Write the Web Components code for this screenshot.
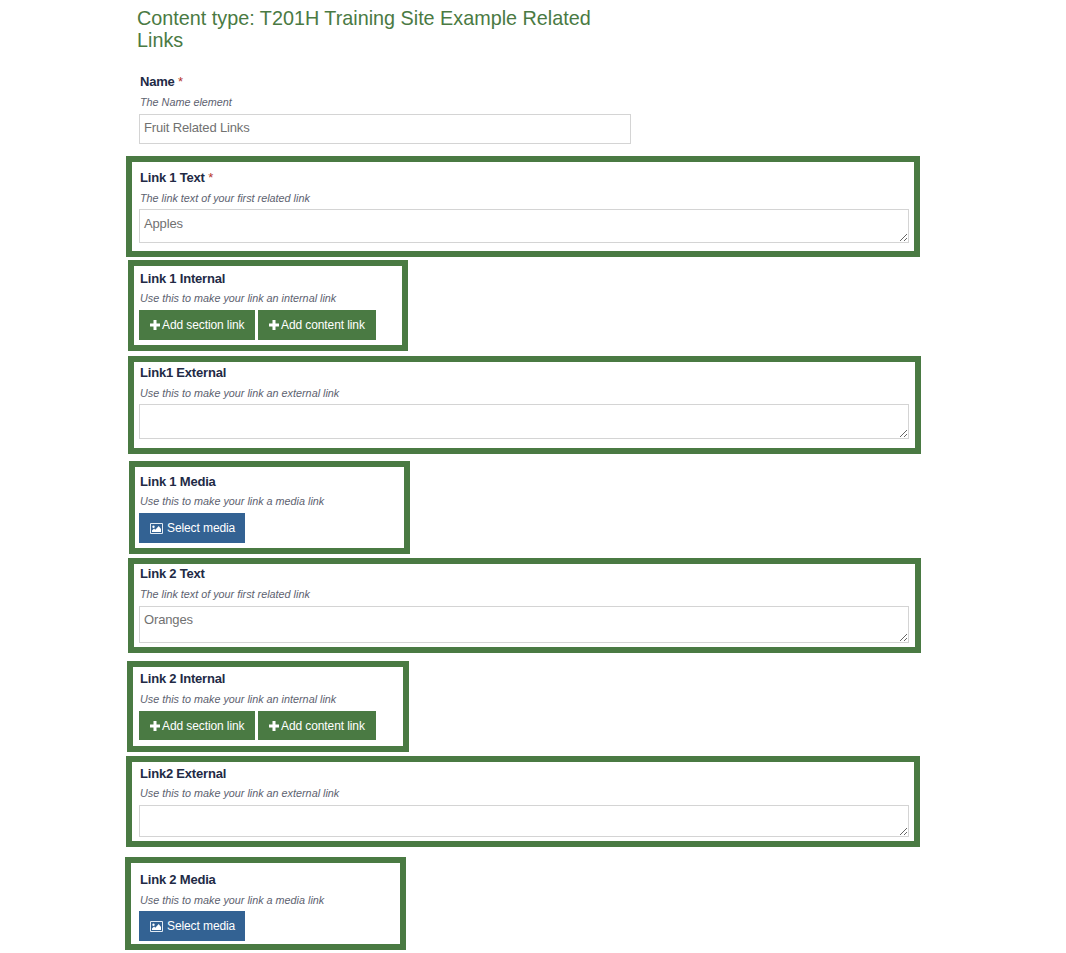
<!DOCTYPE html>
<html>
<head>
<meta charset="utf-8">
<title>Content type</title>
<style>
  body { margin: 0; background: #fff; font-family: "Liberation Sans", Arial, sans-serif; }
</style>
</head>
<body>
<edit-page>
  <h-title>Content type: T201H Training Site Example Related Links</h-title>

  <form-field label="Name" help="The Name element" required style="--mt:21px;--ml:139px;--w:492px;--bw:0px;--pl:0px;--pt:0px;--pb:0px;--gap:4px;--gap2:4px">
    <text-box>Fruit Related Links</text-box>
  </form-field>

  <form-field label="Link 1 Text" help="The link text of your first related link" required style="--mt:12px;--ml:126px;--w:794px;--pt:6px;--pb:8px;--gap:4px;--gap2:3px">
    <area-box h="34">Apples</area-box>
  </form-field>

  <form-field label="Link 1 Internal" help="Use this to make your link an internal link" style="--mt:3px;--ml:128px;--w:280px;--pt:3px;--pb:5px;--gap:3px;--gap2:4px;--pl:5px">
    <action-btn icon="plus" w="116">Add section link</action-btn>
    <action-btn icon="plus" w="118">Add content link</action-btn>
  </form-field>

  <form-field label="Link1 External" help="Use this to make your link an external link" style="--mt:5px;--ml:128px;--w:793px;--pt:1px;--pb:9px;--gap:4px;--gap2:3px;--pl:5px">
    <area-box h="35"></area-box>
  </form-field>

  <form-field label="Link 1 Media" help="Use this to make your link a media link" style="--mt:7px;--ml:129px;--w:281px;--pt:5px;--pb:5px;--gap:3px;--gap2:4px;--pl:4px">
    <action-btn icon="picture" color="#336293" w="106">Select media</action-btn>
  </form-field>

  <form-field label="Link 2 Text" help="The link text of your first related link" style="--mt:4px;--ml:128px;--w:793px;--pt:0px;--pb:4px;--gap:4px;--gap2:4px;--pl:5px">
    <area-box h="37" pad="3">Oranges</area-box>
  </form-field>

  <form-field label="Link 2 Internal" help="Use this to make your link an internal link" style="--mt:8px;--ml:127px;--w:282px;--pt:2px;--pb:6px;--gap:4px;--gap2:4px;--pl:6px">
    <action-btn icon="plus" w="116" h="29">Add section link</action-btn>
    <action-btn icon="plus" w="118" h="29">Add content link</action-btn>
  </form-field>

  <form-field label="Link2 External" help="Use this to make your link an external link" style="--mt:4px;--ml:126px;--w:794px;--pt:2px;--pb:4px;--gap:3px;--gap2:4px;--pl:7px">
    <area-box h="32"></area-box>
  </form-field>

  <form-field label="Link 2 Media" help="Use this to make your link a media link" style="--mt:10px;--ml:125px;--w:281px;--pt:7px;--pb:3px;--gap:4px;--gap2:3px;--pl:8px">
    <action-btn icon="picture" color="#336293" w="106">Select media</action-btn>
  </form-field>
</edit-page>

<script>
class EditPage extends HTMLElement {
  constructor() {
    super();
    this.attachShadow({ mode: 'open' });
    this.shadowRoot.innerHTML = `
      <style>
        :host { display: flex; flex-direction: column; align-items: flex-start; width: 1066px; }
      </style>
      <slot></slot>`;
  }
}

class HTitle extends HTMLElement {
  constructor() {
    super();
    this.attachShadow({ mode: 'open' });
    this.shadowRoot.innerHTML = `
      <style>
        :host { display: block; margin: 7px 0 0 137px; width: 470px; font-size: 19.8px; line-height: 22px; color: #4a7a43; }
      </style>
      <slot></slot>`;
  }
}

class FormField extends HTMLElement {
  constructor() {
    super();
    this.attachShadow({ mode: 'open' });
  }
  connectedCallback() {
    const label = this.getAttribute('label') || '';
    const help = this.getAttribute('help') || '';
    const star = this.hasAttribute('required') ? '<span class="req"> *</span>' : '';
    this.shadowRoot.innerHTML = `
      <style>
        :host {
          display: block;
          box-sizing: border-box;
          margin: var(--mt, 0) 0 0 var(--ml, 0);
          width: var(--w);
          border: var(--bw, 6px) solid #4a7a43;
          padding: var(--pt, 0) 0 var(--pb, 0) var(--pl, 7px);
        }
        .label { height: 18px; line-height: 20px; padding-left: 1px; font-size: 13px; letter-spacing: -0.2px; font-weight: bold; color: #222a45; white-space: nowrap; }
        .req { color: #b5352a; font-weight: normal; }
        .help { height: 16px; line-height: 16px; margin-top: var(--gap, 3px); padding-left: 1px; font-size: 10.8px; font-style: italic; color: #5d6270; white-space: nowrap; }
        .ctl { display: flex; gap: 3px; margin-top: var(--gap2, 3px); }
      </style>
      <div class="label">${label}${star}</div>
      <div class="help">${help}</div>
      <div class="ctl"><slot></slot></div>`;
  }
}

class TextBox extends HTMLElement {
  constructor() {
    super();
    this.attachShadow({ mode: 'open' });
    this.shadowRoot.innerHTML = `
      <style>
        :host { display: block; box-sizing: border-box; width: 492px; height: 30px; border: 1px solid #d4d4d4; padding: 0 4px; font-size: 13px; letter-spacing: -0.15px; line-height: 25px; color: #717171; }
      </style>
      <slot></slot>`;
  }
}

class AreaBox extends HTMLElement {
  constructor() {
    super();
    this.attachShadow({ mode: 'open' });
  }
  connectedCallback() {
    const text = this.textContent;
    const h = this.getAttribute('h') || 34;
    const pad = this.getAttribute('pad') || 4;
    this.shadowRoot.innerHTML = `
      <style>
        :host { display: block; }
        textarea {
          display: block; box-sizing: border-box; width: 770px; height: ${h}px; margin: 0;
          border: 1px solid #d4d4d4; border-radius: 0; outline: none; padding: ${pad}px 4px 4px;
          font: 13px/20px "Liberation Sans", Arial, sans-serif; letter-spacing: -0.15px; color: #717171; background: #fff; resize: both;
        }
      </style>
      <textarea>${text}</textarea>`;
  }
}

const ICONS = {
  plus: '<svg width="10" height="10" viewBox="0 0 10 10"><path fill="#fff" d="M3.500 0h3v3.500H10v3H6.500V10h-3V6.500H0v-3h3.500z"/></svg>',
  picture: '<svg width="13" height="11" viewBox="0 0 13 11"><path fill="#e4ecf4" fill-rule="evenodd" d="M1 0h11a1 1 0 0 1 1 1v9a1 1 0 0 1-1 1H1a1 1 0 0 1-1-1V1a1 1 0 0 1 1-1zm0 1v9h11V1z"/><path fill="#fff" d="M2 9V7.500l2-2 1.300 1.300 3.400-3.700L11 6v3zM3.500 4.900a1.200 1.200 0 1 1 0-2.400 1.200 1.200 0 0 1 0 2.400z"/></svg>'
};

class ActionBtn extends HTMLElement {
  constructor() {
    super();
    this.attachShadow({ mode: 'open' });
  }
  connectedCallback() {
    const icon = ICONS[this.getAttribute('icon')] || '';
    const w = this.getAttribute('w') || 100;
    const h = this.getAttribute('h') || 30;
    const color = this.getAttribute('color') || '#4a7a43';
    const iconGap = this.getAttribute('icon') === 'picture' ? 4 : 2;
    this.shadowRoot.innerHTML = `
      <style>
        :host { display: flex; align-items: center; gap: ${iconGap}px; box-sizing: border-box; width: ${w}px; height: ${h}px; padding-left: 11px; background: ${color}; color: #fff; font-size: 12px; letter-spacing: -0.1px; white-space: nowrap; }
        svg { display: block; }
      </style>
      ${icon}<slot></slot>`;
  }
}

customElements.define('edit-page', EditPage);
customElements.define('h-title', HTitle);
customElements.define('form-field', FormField);
customElements.define('text-box', TextBox);
customElements.define('area-box', AreaBox);
customElements.define('action-btn', ActionBtn);
</script>
</body>
</html>
